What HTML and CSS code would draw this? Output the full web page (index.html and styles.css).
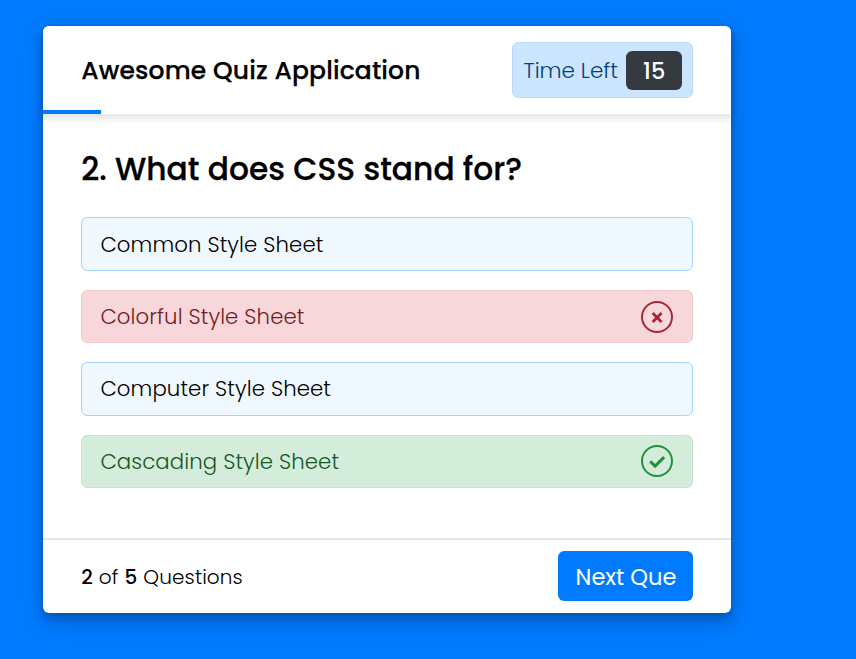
FILE: index.html
```
<!DOCTYPE html>
<html lang="en">
<head>
<meta charset="utf-8">
<title>Awesome Quiz Application</title>
<link rel="stylesheet" href="styles.css">
</head>
<body>
<main class="quiz-box">
  <header class="quiz-header">
    <h1 class="title">Awesome Quiz Application</h1>
    <div class="timer">
      <span class="timer-text">Time Left</span>
      <span class="timer-sec">15</span>
    </div>
    <div class="time-line"></div>
  </header>
  <section class="quiz-body">
    <h2 class="question">2. What does CSS stand for?</h2>
    <div class="options">
      <div class="option"><span>Common Style Sheet</span></div>
      <div class="option incorrect"><span>Colorful Style Sheet</span>
        <svg class="icon" viewBox="0 0 32 32"><circle cx="16" cy="16" r="15"/><path d="M11.7 12.1l8.8 8.8M20.5 12.1l-8.8 8.8" stroke-width="2.8"/></svg>
      </div>
      <div class="option"><span>Computer Style Sheet</span></div>
      <div class="option correct"><span>Cascading Style Sheet</span>
        <svg class="icon" viewBox="0 0 32 32"><circle cx="16" cy="16" r="15"/><path d="M9.2 16.4l4.9 4.7 9-9" stroke-width="3"/></svg>
      </div>
    </div>
  </section>
  <footer class="quiz-footer">
    <p class="total"><b>2</b> of <b>5</b> Questions</p>
    <button class="next">Next Que</button>
  </footer>
</main>
</body>
</html>
```

FILE: styles.css
```
* { margin: 0; padding: 0; box-sizing: border-box; }

body {
  height: 659px;
  padding: 26.4px 0 0 43.2px;
  overflow: hidden;
  background: #007bff;
  font-family: Poppins, Inter, sans-serif;
  font-weight: 300;
  color: #000;
}

.quiz-box {
  display: flex;
  flex-direction: column;
  width: 688.3px;
  height: 587px;
  background: #fff;
  border-radius: 6.25px;
  box-shadow: 0 5px 10px rgba(0, 0, 0, .2), 0 7.5px 25px rgba(0, 0, 0, .19);
}

.quiz-header {
  position: relative;
  display: flex;
  align-items: center;
  justify-content: space-between;
  height: 88px;
  padding: 0 38px;
  background: #fff;
  border-radius: 6.25px 6.25px 0 0;
  box-shadow: 0 3.75px 6.25px 1px rgba(0, 0, 0, .1);
}

.title {
  padding-top: 1px;
  font-size: 25px;
  font-weight: 500;
  letter-spacing: .14px;
  -webkit-text-stroke: .25px #000;
  white-space: nowrap;
}

.timer {
  display: flex;
  align-items: center;
  justify-content: space-between;
  width: 181px;
  height: 56px;
  padding: 0 10px;
  background: #cce5ff;
  border: 1px solid #b8daff;
  border-radius: 6.25px;
  color: #004085;
}

.timer-text { font-size: 21.5px; white-space: nowrap; }

.timer-sec {
  width: 56.5px;
  height: 38.5px;
  line-height: 40.5px;
  text-align: center;
  font-size: 22.5px;
  font-weight: 500;
  color: #fff;
  background: #343a40;
  border-radius: 6.25px;
}

.time-line {
  position: absolute;
  left: 0;
  bottom: 0;
  width: 58px;
  height: 4px;
  background: #007bff;
}

.quiz-body { flex: 1; padding: 31px 38px 0; }

.question {
  height: 47px;
  line-height: 48px;
  font-size: 31.25px;
  font-weight: 500;
  letter-spacing: .05px;
  -webkit-text-stroke: .3px #000;
  white-space: nowrap;
}

.options { display: grid; gap: 18.8px; margin-top: 25px; }

.option {
  display: flex;
  align-items: center;
  justify-content: space-between;
  height: 53.6px;
  padding: 0 18.75px 0 18.2px;
  background: #f0f8ff;
  border: 1.25px solid #a3d3fe;
  border-radius: 6.25px;
  font-size: 21.25px;
  letter-spacing: .1px;
  white-space: nowrap;
}

.option.incorrect { color: #721c24; background: #f8d7da; border-color: #f5c6cb; }
.option.correct { color: #155724; background: #d4edda; border-color: #c3e6cb; }

.icon { width: 32px; height: 32px; margin-right: .8px; fill: none; stroke-width: 2; }
.incorrect .icon { stroke: #a42834; }
.correct .icon { stroke: #23903c; }

.quiz-footer {
  display: flex;
  align-items: center;
  justify-content: space-between;
  height: 75.6px;
  padding: 0 38px;
  border-top: 2px solid #e6e6e6;
}

.total { font-size: 20px; letter-spacing: .12px; word-spacing: .4px; }
.total b { font-weight: 500; }

.next {
  width: 135px;
  height: 50px;
  margin-bottom: 1px;
  padding-top: 1px;
  border: 0;
  border-radius: 6.25px;
  background: #007bff;
  color: #fff;
  font: 400 22.5px Poppins, Inter, sans-serif;
  white-space: nowrap;
}
```
